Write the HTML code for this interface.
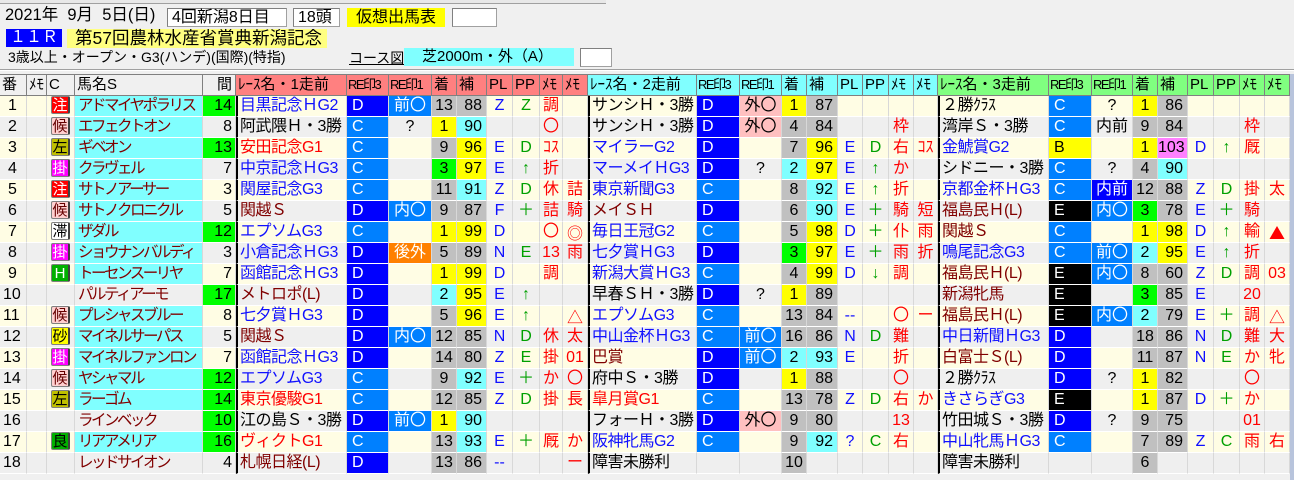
<!DOCTYPE html>
<html><head><meta charset="utf-8">
<style>
*{margin:0;padding:0;box-sizing:border-box}
body{width:1294px;height:480px;overflow:hidden;background:#f0f0f0;font-family:"Liberation Sans","Noto Sans CJK JP",sans-serif;position:relative;color:#000}
.a{position:absolute;white-space:nowrap}
.bx{border:1px solid #a0a0a0;border-top-color:#808080;border-left-color:#808080;background:#fff;height:19px;font-size:16px;line-height:17px;padding-left:4px}
table{position:absolute;left:0;top:74px;width:1290px;table-layout:fixed;border-collapse:separate;border-spacing:0;font-size:16px}
tr{height:21px}
td{border-right:1px solid #d8d8d8;border-bottom:1px solid #fff;line-height:20px;text-align:center;white-space:nowrap;overflow:hidden;padding:0}
tr.h td{background:#f0f0f0;border-right:1px solid #808080;border-bottom:1px solid #808080;border-top:1px solid #808080;text-align:left;padding-left:2px;font-size:15px}
tr.h td.re{font-size:13px;letter-spacing:-1.5px;padding-left:1px}
tr.h td.p1{background:#ff8080}tr.h td.p2{background:#80ffff}tr.h td.p3{background:#80ff80}
tr.y td{background:#fffde4}tr.g td{background:#efefef}
tr td.cy{background:#80ffff}tr td.ye{background:#ffff00}tr td.gr{background:#c0c0c0}tr td.gn{background:#00ff00}tr td.mg{background:#ff80ff}
tr td.D{background:#0000ff;color:#fff;text-align:left;padding-left:5px}
tr td.C{background:#0080ff;color:#fff;text-align:left;padding-left:5px}
tr td.E{background:#000;color:#fff;text-align:left;padding-left:5px}
tr td.B{background:#ffff00;text-align:left;padding-left:5px}
tr td.bl{background:#0080ff;color:#fff}tr td.db{background:#0000ff;color:#fff}
tr td.pk{background:#ffc0c0}tr td.or{background:#ff8000;color:#fff}
td.num{text-align:left;padding-left:8px}
td.nm{text-align:left;padding-left:3px;color:#800000;letter-spacing:-2.5px;font-size:15.5px}
td.gp{text-align:right;padding-right:3px}
td.rn{text-align:left;border-left:2px solid #000;padding-left:2px;letter-spacing:-0.5px}
td.hn{text-align:right;padding-right:4px}
.b{color:#1010ff}.r{color:#ff0000}.m{color:#800000}.G{color:#00a000}
.j{font-family:"Noto Sans CJK JP",sans-serif}
i{font-style:normal;display:inline-block;width:19px;height:18px;line-height:17px;font-size:15px;border:1px solid #808080;border-right:2px solid #404040;border-radius:2px;vertical-align:middle;margin-top:-2px}
.k1{background:#ff0000;color:#fff}.k2{background:#ffd0d0;color:#600}.k3{background:#c0c000}.k4{background:#ff00ff;color:#fff}.k5{background:#fff}.k6{background:#00b000;color:#fff}.k7{background:#ffff00}.k8{background:#00b000;color:#000}
</style></head><body>
<div class="a" style="left:0;top:0;width:606px;height:4px;border-bottom:1px solid #a0a0a0;background:#e8e8e8"></div>
<div class="a" style="left:5px;top:5px;font-size:16.5px;line-height:20px">2021年&nbsp; 9月&nbsp; 5日(日)</div>
<div class="a bx" style="left:167px;top:8px;width:120px">4回新潟8日目</div>
<div class="a bx" style="left:293px;top:8px;width:47px">18頭</div>
<div class="a bx" style="left:347px;top:8px;width:98px;background:#ffff00;border-color:#ffff00;padding-left:8px">仮想出馬表</div>
<div class="a bx" style="left:452px;top:8px;width:45px"></div>
<div class="a" style="left:6px;top:29px;width:56px;height:18px;background:#0000ff;color:#fff;font-size:16px;line-height:18px;padding-left:4px">１１Ｒ</div>
<div class="a" style="left:67px;top:29px;width:260px;height:19px;background:#ffff80;font-size:17.5px;line-height:19px;padding-left:8px">第57回農林水産省賞典新潟記念</div>
<div class="a" style="left:8px;top:47px;font-size:14px;line-height:20px">3歳以上・オープン・G3(ハンデ)(国際)(特指)</div>
<div class="a" style="left:349px;top:50px;font-size:14px;line-height:17px;text-decoration:underline">コース図</div>
<div class="a" style="left:404px;top:48px;width:170px;height:18px;background:#80ffff;font-size:15px;line-height:18px;padding-left:18px">芝2000m・外（A）</div>
<div class="a bx" style="left:580px;top:48px;width:32px"></div>
<div class="a" style="left:0;top:69px;width:1294px;height:2px;border-top:1px solid #a0a0a0;border-bottom:1px solid #fff"></div>
<div class="a" style="left:1290px;top:74px;width:4px;height:406px;background:#b8c4dc"></div>
<table>
<colgroup><col style="width:27px"><col style="width:20px"><col style="width:28px"><col style="width:128px"><col style="width:33px"><col style="width:111px"><col style="width:42px"><col style="width:43px"><col style="width:25px"><col style="width:30px"><col style="width:26px"><col style="width:27px"><col style="width:23px"><col style="width:25px"><col style="width:109px"><col style="width:43px"><col style="width:42px"><col style="width:25px"><col style="width:31px"><col style="width:25px"><col style="width:26px"><col style="width:25px"><col style="width:24px"><col style="width:111px"><col style="width:43px"><col style="width:41px"><col style="width:25px"><col style="width:30px"><col style="width:26px"><col style="width:26px"><col style="width:25px"><col style="width:25px"></colgroup>
<tr class="h"><td>番</td><td>ﾒﾓ</td><td>C</td><td>馬名S</td><td style="text-align:right;padding-right:3px">間</td><td class="p1">ﾚｰｽ名・1走前</td><td class="p1 re">RE印3</td><td class="p1 re">RE印1</td><td class="p1">着</td><td class="p1">補</td><td class="p1">PL</td><td class="p1">PP</td><td class="p1">ﾒﾓ</td><td class="p1">ﾒﾓ</td><td class="p2">ﾚｰｽ名・2走前</td><td class="p2 re">RE印3</td><td class="p2 re">RE印1</td><td class="p2">着</td><td class="p2">補</td><td class="p2">PL</td><td class="p2">PP</td><td class="p2">ﾒﾓ</td><td class="p2">ﾒﾓ</td><td class="p3">ﾚｰｽ名・3走前</td><td class="p3 re">RE印3</td><td class="p3 re">RE印1</td><td class="p3">着</td><td class="p3">補</td><td class="p3">PL</td><td class="p3">PP</td><td class="p3">ﾒﾓ</td><td class="p3">ﾒﾓ</td></tr>

<tr class="y"><td class="num">1</td><td></td><td><i class="k1">注</i></td><td class="nm cy">アドマイヤポラリス</td><td class="gp gn">14</td>
<td class="rn b">目黒記念ＨG2</td><td class="D">D</td><td class="bl">前〇</td><td class="gr">13</td><td class="hn gr">88</td><td class="b">Z</td><td class="G">Z</td><td class="r">調</td><td></td>
<td class="rn">サンシＨ・3勝</td><td class="D">D</td><td class="pk">外〇</td><td class="ye">1</td><td class="hn gr">87</td><td></td><td></td><td></td><td></td>
<td class="rn">２勝ｸﾗｽ</td><td class="C">C</td><td>?</td><td class="ye">1</td><td class="hn gr">86</td><td></td><td></td><td></td><td></td></tr>

<tr class="g"><td class="num">2</td><td></td><td><i class="k2">候</i></td><td class="nm cy">エフェクトオン</td><td class="gp">8</td>
<td class="rn">阿武隈Ｈ・3勝</td><td class="C">C</td><td>?</td><td class="ye">1</td><td class="hn cy">90</td><td></td><td></td><td class="r">〇</td><td></td>
<td class="rn">サンシＨ・3勝</td><td class="D">D</td><td class="pk">外〇</td><td class="gr">4</td><td class="hn gr">84</td><td></td><td></td><td class="r">枠</td><td></td>
<td class="rn">湾岸Ｓ・3勝</td><td class="C">C</td><td>内前</td><td class="gr">9</td><td class="hn gr">84</td><td></td><td></td><td class="r">枠</td><td></td></tr>

<tr class="y"><td class="num">3</td><td></td><td><i class="k3">左</i></td><td class="nm cy">ギベオン</td><td class="gp gn">13</td>
<td class="rn r">安田記念G1</td><td class="C">C</td><td></td><td class="gr">9</td><td class="hn ye">96</td><td class="b">E</td><td class="G">D</td><td class="r">ｺｽ</td><td></td>
<td class="rn b">マイラーG2</td><td class="D">D</td><td></td><td class="gr">7</td><td class="hn ye">96</td><td class="b">E</td><td class="G">D</td><td class="r">右</td><td class="r">ｺｽ</td>
<td class="rn b">金鯱賞G2</td><td class="B">B</td><td></td><td class="ye">1</td><td class="hn mg">103</td><td class="b">D</td><td class="G">↑</td><td class="r">厩</td><td></td></tr>

<tr class="g"><td class="num">4</td><td></td><td><i class="k4">掛</i></td><td class="nm cy">クラヴェル</td><td class="gp">7</td>
<td class="rn b">中京記念ＨG3</td><td class="C">C</td><td></td><td class="gn">3</td><td class="hn ye">97</td><td class="b">E</td><td class="G">↑</td><td class="r">折</td><td></td>
<td class="rn b">マーメイＨG3</td><td class="D">D</td><td>?</td><td class="cy">2</td><td class="hn ye">97</td><td class="b">E</td><td class="G">↑</td><td class="r">か</td><td></td>
<td class="rn">シドニー・3勝</td><td class="C">C</td><td>?</td><td class="gr">4</td><td class="hn cy">90</td><td></td><td></td><td></td><td></td></tr>

<tr class="y"><td class="num">5</td><td></td><td><i class="k1">注</i></td><td class="nm cy">サトノアーサー</td><td class="gp">3</td>
<td class="rn b">関屋記念G3</td><td class="C">C</td><td></td><td class="gr">11</td><td class="hn cy">91</td><td class="b">Z</td><td class="G">D</td><td class="r">休</td><td class="r">詰</td>
<td class="rn b">東京新聞G3</td><td class="C">C</td><td></td><td class="gr">8</td><td class="hn cy">92</td><td class="b">E</td><td class="G">↑</td><td class="r">折</td><td></td>
<td class="rn b">京都金杯ＨG3</td><td class="C">C</td><td class="db">内前</td><td class="gr">12</td><td class="hn gr">88</td><td class="b">Z</td><td class="G">D</td><td class="r">掛</td><td class="r">太</td></tr>

<tr class="g"><td class="num">6</td><td></td><td><i class="k2">候</i></td><td class="nm cy">サトノクロニクル</td><td class="gp">5</td>
<td class="rn m">関越Ｓ</td><td class="D">D</td><td class="bl">内〇</td><td class="gr">9</td><td class="hn gr">87</td><td class="b">F</td><td class="G">＋</td><td class="r">詰</td><td class="r">騎</td>
<td class="rn m">メイＳＨ</td><td class="D">D</td><td></td><td class="gr">6</td><td class="hn cy">90</td><td class="b">E</td><td class="G">＋</td><td class="r">騎</td><td class="r">短</td>
<td class="rn m">福島民Ｈ(L)</td><td class="E">E</td><td class="bl">内〇</td><td class="gn">3</td><td class="hn gr">78</td><td class="b">E</td><td class="G">＋</td><td class="r">騎</td><td></td></tr>

<tr class="y"><td class="num">7</td><td></td><td><i class="k5">滞</i></td><td class="nm cy">ザダル</td><td class="gp gn">12</td>
<td class="rn b">エプソムG3</td><td class="C">C</td><td></td><td class="ye">1</td><td class="hn ye">99</td><td class="b">D</td><td></td><td class="r">〇</td><td class="r j">◎</td>
<td class="rn b">毎日王冠G2</td><td class="C">C</td><td></td><td class="gr">5</td><td class="hn ye">98</td><td class="b">D</td><td class="G">＋</td><td class="r">仆</td><td class="r">雨</td>
<td class="rn m">関越Ｓ</td><td class="C">C</td><td></td><td class="ye">1</td><td class="hn ye">98</td><td class="b">D</td><td class="G">↑</td><td class="r">輸</td><td class="r j">▲</td></tr>

<tr class="g"><td class="num">8</td><td></td><td><i class="k4">掛</i></td><td class="nm cy">ショウナンバルディ</td><td class="gp">3</td>
<td class="rn b">小倉記念ＨG3</td><td class="D">D</td><td class="or">後外</td><td class="gr">5</td><td class="hn gr">89</td><td class="b">N</td><td class="G">E</td><td class="r">13</td><td class="r">雨</td>
<td class="rn b">七夕賞ＨG3</td><td class="D">D</td><td></td><td class="gn">3</td><td class="hn ye">97</td><td class="b">E</td><td class="G">＋</td><td class="r">雨</td><td class="r">折</td>
<td class="rn b">鳴尾記念G3</td><td class="C">C</td><td class="bl">前〇</td><td class="cy">2</td><td class="hn ye">95</td><td class="b">E</td><td class="G">↑</td><td class="r">折</td><td></td></tr>

<tr class="y"><td class="num">9</td><td></td><td><i class="k6">H</i></td><td class="nm cy">トーセンスーリヤ</td><td class="gp">7</td>
<td class="rn b">函館記念ＨG3</td><td class="D">D</td><td></td><td class="ye">1</td><td class="hn ye">99</td><td class="b">D</td><td></td><td class="r">調</td><td></td>
<td class="rn b">新潟大賞ＨG3</td><td class="C">C</td><td></td><td class="gr">4</td><td class="hn ye">99</td><td class="b">D</td><td class="G">↓</td><td class="r">調</td><td></td>
<td class="rn m">福島民Ｈ(L)</td><td class="E">E</td><td class="bl">内〇</td><td class="gr">8</td><td class="hn gr">60</td><td class="b">Z</td><td class="G">D</td><td class="r">調</td><td class="r">03</td></tr>

<tr class="g"><td class="num" style="padding-left:3px">10</td><td></td><td></td><td class="nm">パルティアーモ</td><td class="gp gn">17</td>
<td class="rn m">メトロポ(L)</td><td class="D">D</td><td></td><td class="cy">2</td><td class="hn ye">95</td><td class="b">E</td><td class="G">↑</td><td></td><td></td>
<td class="rn">早春ＳＨ・3勝</td><td class="D">D</td><td>?</td><td class="ye">1</td><td class="hn gr">89</td><td></td><td></td><td></td><td></td>
<td class="rn m">新潟牝馬</td><td class="E">E</td><td></td><td class="gn">3</td><td class="hn gr">85</td><td class="b">E</td><td></td><td class="r">20</td><td></td></tr>

<tr class="y"><td class="num" style="padding-left:3px">11</td><td></td><td><i class="k2">候</i></td><td class="nm cy">プレシャスブルー</td><td class="gp">8</td>
<td class="rn b">七夕賞ＨG3</td><td class="D">D</td><td></td><td class="gr">5</td><td class="hn ye">96</td><td class="b">E</td><td class="G">↑</td><td></td><td class="r j">△</td>
<td class="rn b">エプソムG3</td><td class="C">C</td><td></td><td class="gr">13</td><td class="hn gr">84</td><td class="b">--</td><td></td><td class="r">〇</td><td class="r">ー</td>
<td class="rn m">福島民Ｈ(L)</td><td class="E">E</td><td class="bl">内〇</td><td class="cy">2</td><td class="hn gr">79</td><td class="b">E</td><td class="G">＋</td><td class="r">調</td><td class="r j">△</td></tr>

<tr class="g"><td class="num" style="padding-left:3px">12</td><td></td><td><i class="k7">砂</i></td><td class="nm cy">マイネルサーパス</td><td class="gp">5</td>
<td class="rn m">関越Ｓ</td><td class="D">D</td><td class="bl">内〇</td><td class="gr">12</td><td class="hn gr">85</td><td class="b">N</td><td class="G">D</td><td class="r">休</td><td class="r">太</td>
<td class="rn b">中山金杯ＨG3</td><td class="C">C</td><td class="bl">前〇</td><td class="gr">16</td><td class="hn gr">86</td><td class="b">N</td><td class="G">D</td><td class="r">難</td><td></td>
<td class="rn b">中日新聞ＨG3</td><td class="D">D</td><td></td><td class="gr">18</td><td class="hn gr">86</td><td class="b">N</td><td class="G">D</td><td class="r">難</td><td class="r">大</td></tr>

<tr class="y"><td class="num" style="padding-left:3px">13</td><td></td><td><i class="k4">掛</i></td><td class="nm cy">マイネルファンロン</td><td class="gp">7</td>
<td class="rn b">函館記念ＨG3</td><td class="D">D</td><td></td><td class="gr">14</td><td class="hn gr">80</td><td class="b">Z</td><td class="G">E</td><td class="r">掛</td><td class="r">01</td>
<td class="rn m">巴賞</td><td class="D">D</td><td class="bl">前〇</td><td class="cy">2</td><td class="hn cy">93</td><td class="b">E</td><td></td><td class="r">折</td><td></td>
<td class="rn m">白富士Ｓ(L)</td><td class="D">D</td><td></td><td class="gr">11</td><td class="hn gr">87</td><td class="b">N</td><td class="G">E</td><td class="r">か</td><td class="r">牝</td></tr>

<tr class="g"><td class="num" style="padding-left:3px">14</td><td></td><td><i class="k2">候</i></td><td class="nm cy">ヤシャマル</td><td class="gp gn">12</td>
<td class="rn b">エプソムG3</td><td class="C">C</td><td></td><td class="gr">9</td><td class="hn cy">92</td><td class="b">E</td><td class="G">＋</td><td class="r">か</td><td class="r">〇</td>
<td class="rn">府中Ｓ・3勝</td><td class="D">D</td><td></td><td class="ye">1</td><td class="hn gr">88</td><td></td><td></td><td class="r">〇</td><td></td>
<td class="rn">２勝ｸﾗｽ</td><td class="D">D</td><td>?</td><td class="ye">1</td><td class="hn gr">82</td><td></td><td></td><td class="r">〇</td><td></td></tr>

<tr class="y"><td class="num" style="padding-left:3px">15</td><td></td><td><i class="k3">左</i></td><td class="nm cy">ラーゴム</td><td class="gp gn">14</td>
<td class="rn r">東京優駿G1</td><td class="C">C</td><td></td><td class="gr">12</td><td class="hn gr">85</td><td class="b">Z</td><td class="G">D</td><td class="r">掛</td><td class="r">長</td>
<td class="rn r">皐月賞G1</td><td class="C">C</td><td></td><td class="gr">13</td><td class="hn gr">78</td><td class="b">Z</td><td class="G">D</td><td class="r">右</td><td class="r">か</td>
<td class="rn b">きさらぎG3</td><td class="E">E</td><td></td><td class="ye">1</td><td class="hn gr">87</td><td class="b">D</td><td class="G">＋</td><td class="r">か</td><td></td></tr>

<tr class="g"><td class="num" style="padding-left:3px">16</td><td></td><td></td><td class="nm">ラインベック</td><td class="gp gn">10</td>
<td class="rn">江の島Ｓ・3勝</td><td class="D">D</td><td class="bl">前〇</td><td class="ye">1</td><td class="hn cy">90</td><td></td><td></td><td></td><td></td>
<td class="rn">フォーＨ・3勝</td><td class="D">D</td><td class="pk">外〇</td><td class="gr">9</td><td class="hn gr">80</td><td></td><td></td><td class="r">13</td><td></td>
<td class="rn">竹田城Ｓ・3勝</td><td class="D">D</td><td>?</td><td class="gr">9</td><td class="hn gr">75</td><td></td><td></td><td class="r">01</td><td></td></tr>

<tr class="y"><td class="num" style="padding-left:3px">17</td><td></td><td><i class="k8">良</i></td><td class="nm cy">リアアメリア</td><td class="gp gn">16</td>
<td class="rn r">ヴィクトG1</td><td class="C">C</td><td></td><td class="gr">13</td><td class="hn cy">93</td><td class="b">E</td><td class="G">＋</td><td class="r">厩</td><td class="r">か</td>
<td class="rn b">阪神牝馬G2</td><td class="C">C</td><td></td><td class="gr">9</td><td class="hn cy">92</td><td class="b">?</td><td class="G">C</td><td class="r">右</td><td></td>
<td class="rn b">中山牝馬ＨG3</td><td class="C">C</td><td></td><td class="gr">7</td><td class="hn gr">89</td><td class="b">Z</td><td class="G">C</td><td class="r">雨</td><td class="r">右</td></tr>

<tr class="g"><td class="num" style="padding-left:3px">18</td><td></td><td></td><td class="nm">レッドサイオン</td><td class="gp">4</td>
<td class="rn m">札幌日経(L)</td><td class="D">D</td><td></td><td class="gr">13</td><td class="hn gr">86</td><td class="b">--</td><td></td><td></td><td class="r">ー</td>
<td class="rn">障害未勝利</td><td></td><td></td><td class="gr">10</td><td></td><td></td><td></td><td></td><td></td>
<td class="rn">障害未勝利</td><td></td><td></td><td class="gr">6</td><td></td><td></td><td></td><td></td><td></td></tr>
</table>
</body></html>
